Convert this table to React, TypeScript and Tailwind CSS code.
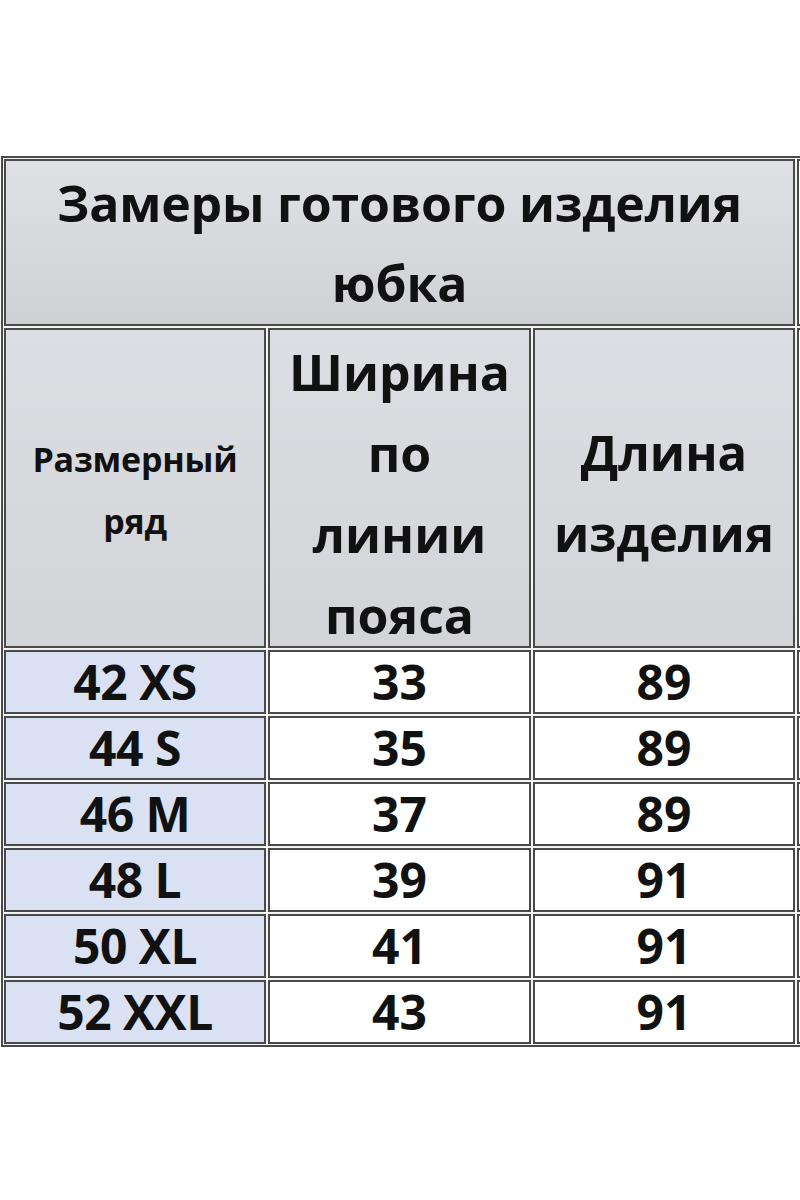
import React from 'react'

const rows = [
    ['42 XS', '33', '89'],
    ['44 S', '35', '89'],
    ['46 M', '37', '89'],
    ['48 L', '39', '91'],
    ['50 XL', '41', '91'],
    ['52 XXL', '43', '91'],
]

const cell = 'border-2 border-[#4a4a4a] flex items-center justify-center text-center'

const App = () => {
    return (
        <div
            className="w-[800px] h-[1200px] overflow-hidden bg-white text-[#111] font-bold"
            style={{ fontFamily: '"Open Sans", "Noto Sans", sans-serif' }}
        >
            <div className="pt-[156px] pl-[1px]">
                <div className="w-[840px] border-2 border-[#4a4a4a] p-[1px] bg-[#f4f4f4]">
                    <div className="grid grid-cols-[262px_263px_262px_40px] grid-rows-[167px_320px_repeat(6,64px)] gap-[2px]">
                        {/* Title */}
                        <div className={`${cell} col-span-3 bg-gradient-to-b from-[#e0e1e5] to-[#d0d1d4] text-[50px] leading-[80px]`}>
                            <div className="tracking-[-0.2px]">
                                Замеры готового изделия
                                <br />
                                юбка
                            </div>
                        </div>
                        <div className={`${cell} bg-white`} />

                        {/* Header */}
                        <div className={`${cell} bg-gradient-to-b from-[#dcdee3] to-[#d3d4d8] text-[34px] leading-[62px]`}>
                            <div className="pt-[4px] tracking-[-0.2px]">
                                Размерный
                                <br />
                                ряд
                            </div>
                        </div>
                        <div className={`${cell} !items-start bg-gradient-to-b from-[#dcdee3] to-[#d3d4d8] text-[50px] leading-[81px]`}>
                            <div className="pt-[2px]">
                                Ширина
                                <br />
                                по
                                <br />
                                линии
                                <br />
                                пояса
                            </div>
                        </div>
                        <div className={`${cell} bg-gradient-to-b from-[#dcdee3] to-[#d3d4d8] text-[49px] leading-[81px]`}>
                            <div className="pt-[10px]">
                                Длина
                                <br />
                                изделия
                            </div>
                        </div>
                        <div className={`${cell} bg-white`} />

                        {/* Data */}
                        {rows.map((r) => (
                            <React.Fragment key={r[0]}>
                                <div className={`${cell} bg-[#d9e1f2] text-[48px] leading-none tracking-[-0.5px]`}>{r[0]}</div>
                                <div className={`${cell} bg-white text-[48px] leading-none`}>{r[1]}</div>
                                <div className={`${cell} bg-white text-[48px] leading-none`}>{r[2]}</div>
                                <div className={`${cell} bg-white`} />
                            </React.Fragment>
                        ))}
                    </div>
                </div>
            </div>
        </div>
    )
}

export default App
